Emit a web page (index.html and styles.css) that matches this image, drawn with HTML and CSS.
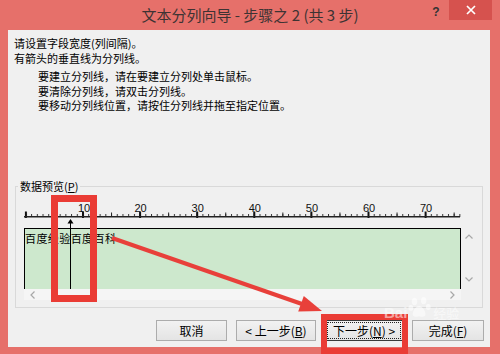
FILE: index.html
```html
<!DOCTYPE html>
<html lang="zh-CN">
<head>
<meta charset="utf-8">
<title>文本分列向导</title>
<link rel="stylesheet" href="styles.css">
</head>
<body>
<div class="window">
  <div class="titlebar">
    <div class="title">文本分列向导 - 步骤之 2 (共 3 步)</div>
    <div class="controls">
      <span class="help">?</span>
      <span class="close"><svg width="10" height="10" viewBox="0 0 10 10"><path d="M1 1L9 9M9 1L1 9" stroke="#fff" stroke-width="1.7"/></svg></span>
    </div>
  </div>
  <div class="client">
    <div class="intro">
      <p>请设置字段宽度(列间隔)。</p>
      <p>有箭头的垂直线为分列线。</p>
    </div>
    <div class="hints">
      <p>要建立分列线，请在要建立分列处单击鼠标。</p>
      <p>要清除分列线，请双击分列线。</p>
      <p>要移动分列线位置，请按住分列线并拖至指定位置。</p>
    </div>
    <fieldset class="group">
      <legend>数据预览(<u>P</u>)</legend>
      <svg class="ruler" width="437" height="22" viewBox="0 0 437 22">
        <defs>
          <pattern id="tk1" patternUnits="userSpaceOnUse" x="1.4" y="0" width="5.71" height="22"><rect x="0" y="14" width="1" height="3" fill="#333"/></pattern>
          <pattern id="tk5" patternUnits="userSpaceOnUse" x="1.4" y="0" width="28.55" height="22"><rect x="0" y="12.5" width="1" height="4.5" fill="#222"/></pattern>
          <pattern id="tk10" patternUnits="userSpaceOnUse" x="0.9" y="0" width="57.1" height="22"><rect x="0" y="11.5" width="2" height="6.5" fill="#111"/></pattern>
        </defs>
        <rect x="0" y="0" width="437" height="22" fill="url(#tk1)"/>
        <rect x="0" y="0" width="437" height="22" fill="url(#tk5)"/>
        <rect x="0" y="0" width="437" height="22" fill="url(#tk10)"/>
        <rect x="0" y="16" width="436" height="1.5" fill="#222"/>
        <g class="ruler-labels" text-anchor="middle">
          <text x="60" y="12">10</text>
          <text x="116.6" y="12">20</text>
          <text x="173.7" y="12">30</text>
          <text x="230.8" y="12">40</text>
          <text x="287.9" y="12">50</text>
          <text x="345" y="12">60</text>
          <text x="402.1" y="12">70</text>
        </g>
      </svg>
      <div class="preview">
        <div class="data">百度经验百度百科</div>
        <div class="vscroll">
          <svg width="8" height="5" viewBox="0 0 8 5"><path d="M0.5 4.5L4 1L7.5 4.5" fill="none" stroke="#a8a8a8" stroke-width="1.2"/></svg>
          <svg width="8" height="5" viewBox="0 0 8 5"><path d="M0.5 0.5L4 4L7.5 0.5" fill="none" stroke="#a8a8a8" stroke-width="1.2"/></svg>
        </div>
        <div class="hscroll">
          <svg width="5" height="8" viewBox="0 0 5 8"><path d="M4.5 0.5L1 4L4.5 7.5" fill="none" stroke="#a8a8a8" stroke-width="1.2"/></svg>
          <svg width="5" height="8" viewBox="0 0 5 8"><path d="M0.5 0.5L4 4L0.5 7.5" fill="none" stroke="#a8a8a8" stroke-width="1.2"/></svg>
        </div>
        <div class="corner"></div>
        <svg class="break" width="7" height="70" viewBox="0 0 7 70"><polygon points="3.5,0 0.5,4.5 6.5,4.5" fill="#000"/><rect x="3" y="4" width="1" height="66" fill="#000"/></svg>
      </div>
    </fieldset>
    <div class="buttons">
      <button class="btn btn-cancel">取消</button>
      <button class="btn btn-back">&lt; 上一步(<u>B</u>)</button>
      <button class="btn btn-next">下一步(<u>N</u>) &gt;</button>
      <button class="btn btn-finish">完成(<u>F</u>)</button>
    </div>
  </div>
  <div class="mark mark-break"></div>
  <div class="mark mark-next"></div>
  <svg class="arrow" width="500" height="354" viewBox="0 0 500 354">
    <line x1="112" y1="238" x2="302" y2="304" stroke="#e8403a" stroke-width="4"/>
    <polygon points="322,311 303.8,296 298.2,311.6" fill="#e8403a"/>
  </svg>
  <div class="watermark">
    <span class="wm-bai">Bai</span>
    <svg class="wm-paw" width="24" height="22" viewBox="0 0 26 24"><ellipse cx="7" cy="6" rx="3" ry="4" fill="currentColor"/><ellipse cx="17" cy="5" rx="3" ry="4" fill="currentColor"/><ellipse cx="3" cy="13" rx="2.6" ry="3.2" fill="currentColor"/><ellipse cx="22" cy="12" rx="2.6" ry="3.2" fill="currentColor"/><path d="M12 11c-4 0-7 6-7 9s3 3 7 2c4 1 7 1 7-2s-3-9-7-9z" fill="currentColor"/></svg>
    <span class="wm-jy">经验</span>
  </div>
</div>
</body>
</html>
```

FILE: styles.css
```css
* { box-sizing: border-box; }
html, body { margin: 0; padding: 0; }
body {
  width: 500px;
  height: 354px;
  overflow: hidden;
  font-family: "Noto Sans CJK SC", "Noto Sans", sans-serif;
  color: #000;
}
.window {
  position: relative;
  width: 500px;
  height: 354px;
  background: #e6706a;
  display: flex;
  flex-direction: column;
  overflow: hidden;
}
.titlebar {
  height: 30px;
  flex: none;
  display: flex;
  align-items: center;
  justify-content: center;
  position: relative;
}
.title {
  font-size: 15px;
  line-height: 20px;
  color: #3d3333;
}
.controls {
  position: absolute;
  top: 0;
  right: 8px;
  display: flex;
  align-items: flex-start;
  gap: 3px;
}
.help {
  width: 20px;
  height: 20px;
  display: flex;
  align-items: center;
  justify-content: center;
  padding-top: 3px;
  font: bold 12px "Liberation Sans", sans-serif;
  color: #333;
}
.close {
  width: 43px;
  height: 20px;
  background: #d6524e;
  display: flex;
  align-items: center;
  justify-content: center;
}
.close svg { display: block; }
.client {
  flex: 1;
  margin: 0 10px 7px 8px;
  background: #f0f0f0;
  padding: 6px 6px 0 6px;
  display: flex;
  flex-direction: column;
}
.intro p, .hints p {
  margin: 0;
  font-size: 11px;
  line-height: 14.5px;
  white-space: nowrap;
}
.hints {
  margin-top: 4px;
  padding-left: 24px;
}
.group {
  margin: 66.5px 1px 0;
  padding: 7px 0 7px 8px;
  border: 1px solid #d9d9d9;
  min-width: 0;
}
.group legend {
  font-size: 11px;
  line-height: 14px;
  padding: 0 2px;
  margin-left: -6px;
}
.ruler { display: block; }
.ruler-labels text {
  font-family: "Liberation Sans", sans-serif;
  font-size: 11px;
  fill: #111;
}
.preview {
  position: relative;
  margin-top: 6px;
  display: grid;
  grid-template-columns: 437px 16px;
  grid-template-rows: 61px 11px;
}
.data {
  background: #cde8cd;
  border: 1px solid #000;
  border-bottom: 0;
  padding: 2px 0 0 0;
  font-size: 11px;
  line-height: 14px;
  letter-spacing: 0.42px;
  white-space: nowrap;
}
.vscroll {
  display: flex;
  flex-direction: column;
  align-items: center;
  justify-content: space-between;
  padding: 6px 0 7px;
}
.vscroll svg, .hscroll svg { display: block; }
.hscroll {
  background: #f5f5f5;
  display: flex;
  align-items: center;
  justify-content: space-between;
  padding: 0 6px 0 6px;
}
.break {
  position: absolute;
  left: 43px;
  top: -9px;
}
.buttons {
  display: flex;
  justify-content: flex-end;
  gap: 9px;
  margin-top: 12px;
}
.btn {
  height: 21px;
  padding: 0;
  border: 1px solid #acacac;
  background: linear-gradient(#f2f2f2, #e4e4e4);
  font-family: "Noto Sans CJK SC", sans-serif;
  font-size: 12px;
  line-height: 19px;
  color: #000;
  display: flex;
  align-items: center;
  justify-content: center;
}
.btn-cancel { width: 71px; }
.btn-back { width: 80px; }
.btn-next {
  width: 78px;
  border-color: #3a3a3a;
  outline: 1px dotted #222;
  outline-offset: -3px;
}
.btn-finish { width: 72px; }
.mark {
  position: absolute;
  border: 7px solid #ea3c35;
}
.mark-break {
  left: 51px;
  top: 195px;
  width: 46px;
  height: 107px;
}
.mark-next {
  left: 321px;
  top: 314px;
  width: 87px;
  height: 40px;
  border-width: 6px;
}
.arrow {
  position: absolute;
  left: 0;
  top: 0;
}
.watermark {
  position: absolute;
  left: 384px;
  top: 296px;
  display: flex;
  align-items: flex-end;
  gap: 1px;
  color: rgba(255, 255, 255, 0.55);
}
.wm-bai {
  font: bold 15px/16px "Liberation Sans", sans-serif;
}
.wm-paw { display: block; margin-bottom: 3px; }
.wm-jy {
  font-size: 13px;
  line-height: 16px;
}
```
